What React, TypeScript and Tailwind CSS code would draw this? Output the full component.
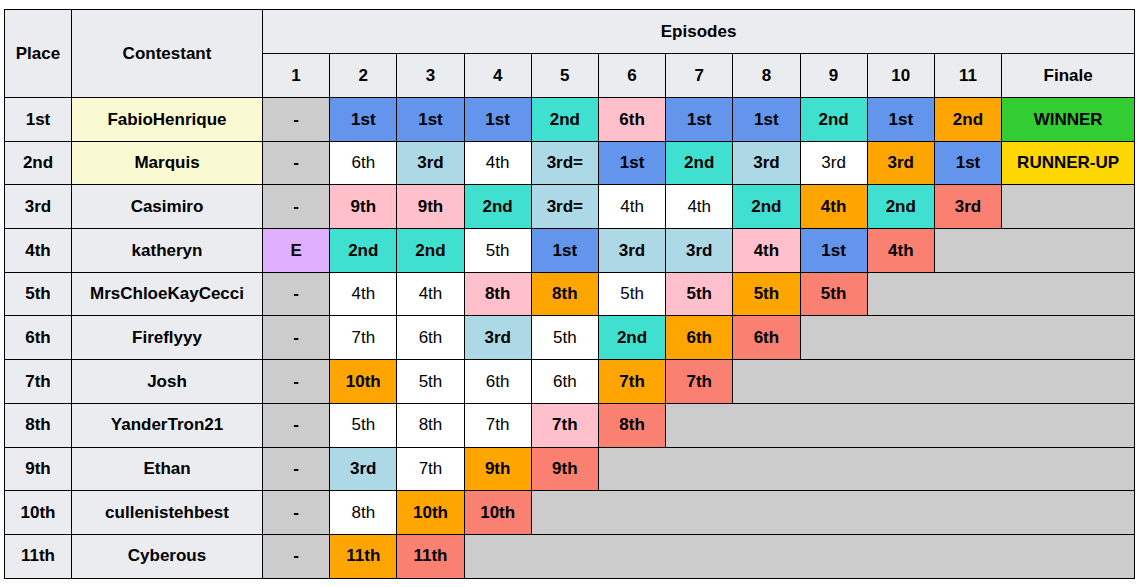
import React from 'react';

type Cell = { t: string; c: string };

const B = 'bg-[#6495ed]';
const T = 'bg-[#40e0d0]';
const P = 'bg-[#ffc0cb]';
const O = 'bg-[#ffa500]';
const S = 'bg-[#fa8072]';
const L = 'bg-[#add8e6]';
const W = 'bg-white';
const G = 'bg-[#cccccc]';

const c = (t: string, cls: string): Cell => ({ t, c: cls });

const rows: { place: string; name: string; top?: boolean; first: Cell; eps: Cell[]; finale?: Cell }[] = [
  {
    place: '1st',
    name: 'FabioHenrique',
    top: true,
    first: c('-', G),
    eps: [c('1st', B), c('1st', B), c('1st', B), c('2nd', T), c('6th', P), c('1st', B), c('1st', B), c('2nd', T), c('1st', B), c('2nd', O)],
    finale: c('WINNER', 'bg-[#32cd32]'),
  },
  {
    place: '2nd',
    name: 'Marquis',
    top: true,
    first: c('-', G),
    eps: [c('6th', W), c('3rd', L), c('4th', W), c('3rd=', L), c('1st', B), c('2nd', T), c('3rd', L), c('3rd', W), c('3rd', O), c('1st', B)],
    finale: c('RUNNER-UP', 'bg-[#ffd700]'),
  },
  {
    place: '3rd',
    name: 'Casimiro',
    first: c('-', G),
    eps: [c('9th', P), c('9th', P), c('2nd', T), c('3rd=', L), c('4th', W), c('4th', W), c('2nd', T), c('4th', O), c('2nd', T), c('3rd', S)],
  },
  {
    place: '4th',
    name: 'katheryn',
    first: c('E', 'bg-[#e0b0ff]'),
    eps: [c('2nd', T), c('2nd', T), c('5th', W), c('1st', B), c('3rd', L), c('3rd', L), c('4th', P), c('1st', B), c('4th', S)],
  },
  {
    place: '5th',
    name: 'MrsChloeKayCecci',
    first: c('-', G),
    eps: [c('4th', W), c('4th', W), c('8th', P), c('8th', O), c('5th', W), c('5th', P), c('5th', O), c('5th', S)],
  },
  {
    place: '6th',
    name: 'Fireflyyy',
    first: c('-', G),
    eps: [c('7th', W), c('6th', W), c('3rd', L), c('5th', W), c('2nd', T), c('6th', O), c('6th', S)],
  },
  {
    place: '7th',
    name: 'Josh',
    first: c('-', G),
    eps: [c('10th', O), c('5th', W), c('6th', W), c('6th', W), c('7th', O), c('7th', S)],
  },
  {
    place: '8th',
    name: 'YanderTron21',
    first: c('-', G),
    eps: [c('5th', W), c('8th', W), c('7th', W), c('7th', P), c('8th', S)],
  },
  {
    place: '9th',
    name: 'Ethan',
    first: c('-', G),
    eps: [c('3rd', L), c('7th', W), c('9th', O), c('9th', S)],
  },
  {
    place: '10th',
    name: 'cullenistehbest',
    first: c('-', G),
    eps: [c('8th', W), c('10th', O), c('10th', S)],
  },
  {
    place: '11th',
    name: 'Cyberous',
    first: c('-', G),
    eps: [c('11th', O), c('11th', S)],
  },
];

const td = 'border border-[#000] text-center align-middle p-0';
const hd = 'bg-[#eaecf0]';

export default function App() {
  return (
    <div className="bg-white w-[1137px] h-[587px] pt-[9px] pl-[4px] font-['Liberation_Sans',Arial,sans-serif] text-[17px] text-black">
      <table className="table-fixed border-collapse w-[1130px]">
        <colgroup>
          <col className="w-[67px]" />
          <col className="w-[191px]" />
          {Array.from({ length: 11 }).map((_, i) => (
            <col key={i} className="w-[67.2px]" />
          ))}
          <col className="w-[133px]" />
        </colgroup>
        <thead>
          <tr className="h-[44px]">
            <th rowSpan={2} className={`${td} ${hd} font-bold`}>Place</th>
            <th rowSpan={2} className={`${td} ${hd} font-bold`}>Contestant</th>
            <th colSpan={12} className={`${td} ${hd} font-bold`}>Episodes</th>
          </tr>
          <tr className="h-[44px]">
            {['1', '2', '3', '4', '5', '6', '7', '8', '9', '10', '11', 'Finale'].map(h => (
              <th key={h} className={`${td} ${hd} font-bold`}>{h}</th>
            ))}
          </tr>
        </thead>
        <tbody>
          {rows.map(r => {
            const used = 1 + r.eps.length + (r.finale ? 1 : 0);
            const rest = 12 - used;
            return (
              <tr key={r.place} className="h-[43.7px]">
                <td className={`${td} ${hd} font-bold`}>{r.place}</td>
                <td className={`${td} ${r.top ? 'bg-[#fafad2]' : hd} font-bold`}>{r.name}</td>
                <td className={`${td} ${r.first.c} font-bold`}>{r.first.t}</td>
                {r.eps.map((e, i) => (
                  <td key={i} className={`${td} ${e.c} ${e.c === W ? 'font-normal' : 'font-bold'}`}>
                    {e.t}
                  </td>
                ))}
                {r.finale && (
                  <td className={`${td} ${r.finale.c} font-bold`}>{r.finale.t}</td>
                )}
                {rest > 0 && <td colSpan={rest} className={`${td} ${G}`} />}
              </tr>
            );
          })}
        </tbody>
      </table>
    </div>
  );
}
